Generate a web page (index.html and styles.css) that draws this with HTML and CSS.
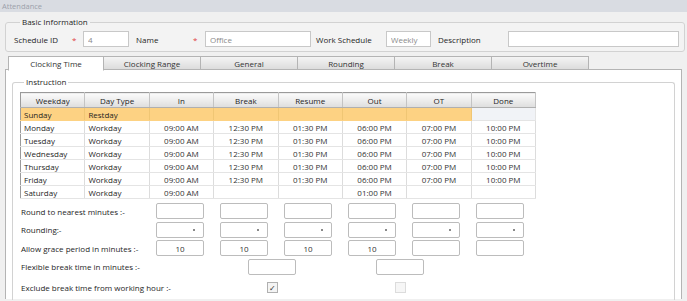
FILE: index.html
```html
<!DOCTYPE html>
<html lang="en">
<head>
    <meta charset="UTF-8">
    <meta name="viewport" content="width=device-width, initial-scale=1.0">
    <title>Attendance</title>
    <link rel="stylesheet" href="styles.css">
</head>
<body>
    <div class="title-bar">Attendance</div>

    <div class="page">
        <fieldset class="group basic-info">
            <legend>Basic Information</legend>
            <div class="info-row">
                <span class="lbl lbl-id">Schedule ID</span>
                <span class="req req-id">*</span>
                <input class="txt txt-id" type="text" value="4">
                <span class="lbl lbl-name">Name</span>
                <span class="req req-name">*</span>
                <input class="txt txt-name" type="text" value="Office">
                <span class="lbl lbl-work">Work Schedule</span>
                <input class="txt txt-work" type="text" value="Weekly">
                <span class="lbl lbl-desc">Description</span>
                <input class="txt txt-desc" type="text" value="">
            </div>
        </fieldset>

        <div class="tabs">
            <div class="tab active">Clocking Time</div>
            <div class="tab">Clocking Range</div>
            <div class="tab">General</div>
            <div class="tab">Rounding</div>
            <div class="tab">Break</div>
            <div class="tab">Overtime</div>
        </div>

        <div class="panel">
            <fieldset class="group instruction">
                <legend>Instruction</legend>

                <table class="grid">
                    <thead>
                        <tr>
                            <th>Weekday</th><th>Day Type</th><th>In</th><th>Break</th>
                            <th>Resume</th><th>Out</th><th>OT</th><th>Done</th>
                        </tr>
                    </thead>
                    <tbody>
                        <tr class="rest">
                            <td>Sunday</td><td>Restday</td><td></td><td></td>
                            <td></td><td></td><td></td><td class="blank"></td>
                        </tr>
                        <tr>
                            <td>Monday</td><td>Workday</td><td class="c">09:00 AM</td><td class="c">12:30 PM</td>
                            <td class="c">01:30 PM</td><td class="c">06:00 PM</td><td class="c">07:00 PM</td><td class="c">10:00 PM</td>
                        </tr>
                        <tr>
                            <td>Tuesday</td><td>Workday</td><td class="c">09:00 AM</td><td class="c">12:30 PM</td>
                            <td class="c">01:30 PM</td><td class="c">06:00 PM</td><td class="c">07:00 PM</td><td class="c">10:00 PM</td>
                        </tr>
                        <tr>
                            <td>Wednesday</td><td>Workday</td><td class="c">09:00 AM</td><td class="c">12:30 PM</td>
                            <td class="c">01:30 PM</td><td class="c">06:00 PM</td><td class="c">07:00 PM</td><td class="c">10:00 PM</td>
                        </tr>
                        <tr>
                            <td>Thursday</td><td>Workday</td><td class="c">09:00 AM</td><td class="c">12:30 PM</td>
                            <td class="c">01:30 PM</td><td class="c">06:00 PM</td><td class="c">07:00 PM</td><td class="c">10:00 PM</td>
                        </tr>
                        <tr>
                            <td>Friday</td><td>Workday</td><td class="c">09:00 AM</td><td class="c">12:30 PM</td>
                            <td class="c">01:30 PM</td><td class="c">06:00 PM</td><td class="c">07:00 PM</td><td class="c">10:00 PM</td>
                        </tr>
                        <tr>
                            <td>Saturday</td><td>Workday</td><td class="c">09:00 AM</td><td></td>
                            <td></td><td class="c">01:00 PM</td><td></td><td></td>
                        </tr>
                    </tbody>
                </table>

                <div class="opts">
                    <div class="opt-row">
                        <span class="opt-label">Round to nearest minutes :-</span>
                        <span class="cell"><input class="box" type="text"></span>
                        <span class="cell"><input class="box" type="text"></span>
                        <span class="cell"><input class="box" type="text"></span>
                        <span class="cell"><input class="box" type="text"></span>
                        <span class="cell"><input class="box" type="text"></span>
                        <span class="cell"><input class="box" type="text"></span>
                    </div>
                    <div class="opt-row">
                        <span class="opt-label">Rounding:-</span>
                        <span class="cell"><span class="combo"><span class="arrow"></span></span></span>
                        <span class="cell"><span class="combo"><span class="arrow"></span></span></span>
                        <span class="cell"><span class="combo"><span class="arrow"></span></span></span>
                        <span class="cell"><span class="combo"><span class="arrow"></span></span></span>
                        <span class="cell"><span class="combo"><span class="arrow"></span></span></span>
                        <span class="cell"><span class="combo"><span class="arrow"></span></span></span>
                    </div>
                    <div class="opt-row">
                        <span class="opt-label">Allow grace period in minutes :-</span>
                        <span class="cell"><input class="box" type="text" value="10"></span>
                        <span class="cell"><input class="box" type="text" value="10"></span>
                        <span class="cell"><input class="box" type="text" value="10"></span>
                        <span class="cell"><input class="box" type="text" value="10"></span>
                        <span class="cell"><input class="box" type="text"></span>
                        <span class="cell"><input class="box" type="text"></span>
                    </div>
                    <div class="opt-row">
                        <span class="opt-label">Flexible break time in minutes :-</span>
                        <span class="cell"></span>
                        <span class="cell wide"><input class="box" type="text"></span>
                        <span class="cell wide"><input class="box" type="text"></span>
                    </div>
                    <div class="opt-row check-row">
                        <span class="opt-label">Exclude break time from working hour :-</span>
                        <span class="cell"></span>
                        <span class="cell wide"><span class="check on">&#10003;</span></span>
                        <span class="cell wide"><span class="check off"></span></span>
                    </div>
                </div>
            </fieldset>
        </div>
    </div>
</body>
</html>
```

FILE: styles.css
```css
* {
    margin: 0;
    padding: 0;
    box-sizing: border-box;
}

body {
    font-family: "Open Sans", "Noto Sans", sans-serif;
    font-size: 8px;
    color: #1e1e1e;
    background: #f0f0f0;
    width: 687px;
    height: 301px;
    overflow: hidden;
}

.title-bar {
    height: 12px;
    line-height: 12px;
    padding-left: 2px;
    background: #d9dce2;
    color: #9ca1aa;
    font-size: 7.5px;
}

.page {
    padding: 0 2px 0 5px;
}

.group {
    border: 1px solid #d2d2d2;
    border-radius: 3px;
}

.group legend {
    padding: 0 2px;
    margin-left: 6px;
    font-size: 8px;
    line-height: 10px;
}

.basic-info {
    margin-top: 5px;
    height: 35px;
    padding: 4px 0 0 8px;
    background: #f3f3f3;
}

.info-row {
    display: flex;
    align-items: center;
    height: 16px;
}

.lbl {
    white-space: nowrap;
}

.req {
    color: #e04040;
}

.lbl-id { width: 58px; }
.req-id { width: 11px; }
.lbl-name { width: 57px; margin-left: 7px; }
.req-name { width: 12px; }
.lbl-work { width: 70px; margin-left: 5px; }
.lbl-desc { width: 70px; margin-left: 7px; }

.txt {
    height: 16px;
    border: 1px solid #c8c8c8;
    background: #fff;
    font-family: inherit;
    font-size: 8px;
    color: #8a8a8a;
    padding: 0 4px;
    outline: none;
}

.txt-id { width: 46px; }
.txt-name { width: 106px; }
.txt-work { width: 45px; }
.txt-desc { width: 171px; }

.tabs {
    display: flex;
    margin: 4px 0 0 3px;
    height: 14px;
}

.tab {
    width: 97px;
    height: 14px;
    line-height: 13px;
    text-align: center;
    border: 1px solid #b4b4b4;
    border-left: none;
    background: linear-gradient(#f4f4f4, #dcdcdc);
    color: #333;
}

.tab.active {
    width: 96px;
    border-left: 1px solid #b4b4b4;
    background: #fff;
    border-bottom-color: #fff;
    position: relative;
    z-index: 1;
    height: 15px;
}

.panel {
    margin-top: -1px;
    margin-right: 3px;
    height: 230px;
    background: #fff;
    border: 1px solid #b4b4b4;
    border-bottom: none;
    padding: 7px 6px 0 6px;
}

.instruction {
    height: 223px;
    padding: 0 0 0 7px;
    border-bottom: none;
    border-radius: 3px 3px 0 0;
}

.instruction legend {
    margin-left: 4px;
}

.grid {
    width: 516px;
    margin-top: 5px;
    border-collapse: collapse;
    border: 1px solid #9a9a9a;
    table-layout: fixed;
}

.grid th {
    height: 15px;
    font-weight: normal;
    background: linear-gradient(#fbfbfb, #dedede);
    border-right: 1px solid #c4c4c4;
    border-bottom: 1px solid #b0b0b0;
    text-align: center;
}

.grid td {
    height: 13px;
    padding: 0 3px;
    border-right: 1px solid #dcdcdc;
    border-bottom: 1px solid #e4e4e4;
    white-space: nowrap;
}

.grid td.c {
    text-align: center;
    color: #333;
}

.grid tr.rest td {
    background: #fdd283;
    border-color: #fdd283;
    border-right-color: #f0c674;
}

.grid tr.rest td.blank {
    background: #f1f3f7;
    border-color: #e4e4e4;
}

.opts {
    margin-top: 3px;
}

.opt-row {
    display: grid;
    grid-template-columns: 128px repeat(6, 64px);
    align-items: center;
    height: 18.5px;
}

.opt-label {
    padding-left: 1px;
    white-space: nowrap;
}

.cell {
    display: flex;
    justify-content: center;
    align-items: center;
}

.cell.wide {
    grid-column: span 2;
    padding-right: 8px;
}

.box {
    width: 48px;
    height: 16px;
    border: 1px solid #bcbcbc;
    border-radius: 2px;
    background: #fff;
    font-family: inherit;
    font-size: 8px;
    text-align: center;
    color: #333;
    outline: none;
}

.combo {
    width: 48px;
    height: 16px;
    border: 1px solid #bcbcbc;
    border-radius: 2px;
    background: #fff;
    display: flex;
    justify-content: flex-end;
    align-items: center;
    padding-right: 8px;
}

.arrow {
    width: 2px;
    height: 2px;
    background: #8a8a8a;
}

.check-row {
    height: 22px;
}

.check {
    width: 11px;
    height: 11px;
    border: 1px solid #b0b0b0;
    background: #f4f4f4;
    font-size: 8px;
    line-height: 9px;
    text-align: center;
    color: #333;
}

.check.off {
    border-color: #dcdcdc;
    background: #f6f6f6;
}
```
